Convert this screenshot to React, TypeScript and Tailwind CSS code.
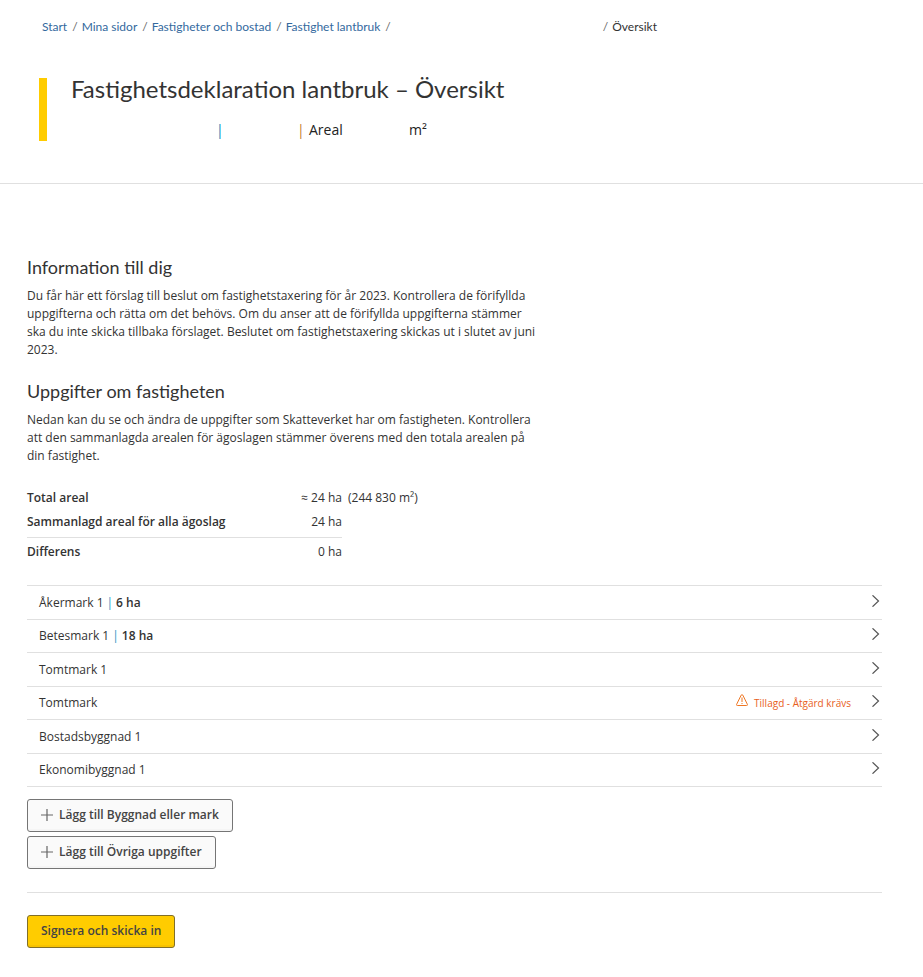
import React from 'react';

const crumbs = ['Start', 'Mina sidor', 'Fastigheter och bostad', 'Fastighet lantbruk'];

const properties = [
  { name: 'Åkermark 1', area: '6 ha' },
  { name: 'Betesmark 1', area: '18 ha' },
  { name: 'Tomtmark 1' },
  { name: 'Tomtmark', warning: 'Tillagd - Åtgärd krävs' },
  { name: 'Bostadsbyggnad 1' },
  { name: 'Ekonomibyggnad 1' },
];

const ChevronIcon = () => (
  <svg className="w-2 h-3 mb-1 shrink-0" viewBox="0 0 8 12" fill="none" stroke="#555" strokeWidth="1.2" aria-hidden="true">
    <path d="M0.5 0.3 L6.5 6 L0.5 11.7" />
  </svg>
);

const WarningIcon = () => (
  <svg className="w-3 h-3 mb-[6px] shrink-0" viewBox="0 0 12 12" fill="none" stroke="#ee7623" aria-hidden="true">
    <path d="M5.2 1.1 Q6 0 6.8 1.1 L11.4 10.4 Q11.7 11.5 10.7 11.5 H1.3 Q0.3 11.5 0.6 10.4 Z" strokeLinejoin="round" />
    <path d="M6 3.5 V8 M6 9 V10" />
  </svg>
);

const PlusIcon = () => (
  <svg className="w-3 h-3 shrink-0" viewBox="0 0 12 12" fill="none" stroke="#666" strokeWidth="1.2" aria-hidden="true">
    <path d="M6 0 V12 M0 6 H12" />
  </svg>
);

const AddButton = ({ label }: { label: string }) => (
  <button
    type="button"
    className="flex items-center gap-[6px] h-[33px] px-[13px] pb-[2px] border border-[#757575] rounded-[3px] bg-[#fafafa] text-[12px] text-[#444] font-semibold shadow-[inset_0_-2px_0_#f5f5f5]"
  >
    <PlusIcon />
    {label}
  </button>
);

const App = () => {
  return (
    <div className="bg-white text-[#333] text-[12px] leading-[18px] font-['Open_Sans',sans-serif]">
      <header className="border-b border-[#e0e0e0] pt-[18px] pb-[42px]">
        <nav aria-label="Brödsmulor" className="px-[42px] font-['Lato',sans-serif]">
          <ol className="flex items-center">
            {crumbs.map(crumb => (
              <li key={crumb} className="whitespace-nowrap">
                <a href="#" className="text-[#34699e] hover:underline">{crumb}</a>
                <span className="pl-[5px] pr-1 text-[#666]">/</span>
              </li>
            ))}
            <li className="w-[208px]" />
            <li className="whitespace-nowrap" aria-current="page">
              <span className="pr-1 text-[#666]">/</span>
              Översikt
            </li>
          </ol>
        </nav>

        <div className="flex mt-[42px] ml-[39px] border-l-8 border-[#ffcc00] pl-6 h-[63px]">
          <div>
            <h1 className="font-['Lato',sans-serif] text-[24px] leading-[22px]">Fastighetsdeklaration lantbruk – Översikt</h1>
            <p className="flex mt-5 text-[14px] leading-5 text-[#222]">
              <span className="w-[145px]" />
              <span className="w-[81px] text-[#0082b8]">|</span>
              <span className="w-3 text-[#c47a28]">|</span>
              <span className="w-[100px]">Areal</span>
              <span>m²</span>
            </p>
          </div>
        </div>
      </header>

      <main className="pl-[27px] pr-[41px] pt-[72px] pb-7">
        <section className="max-w-[514px]">
          <h2 className="font-['Lato',sans-serif] text-[18px] leading-[22px]">Information till dig</h2>
          <p className="mt-[9px]">
            Du får här ett förslag till beslut om fastighetstaxering för år 2023. Kontrollera de förifyllda uppgifterna
            och rätta om det behövs. Om du anser att de förifyllda uppgifterna stämmer ska du inte skicka tillbaka
            förslaget. Beslutet om fastighetstaxering skickas ut i slutet av juni 2023.
          </p>
        </section>

        <section className="max-w-[514px] mt-[21px]">
          <h2 className="font-['Lato',sans-serif] text-[18px] leading-[22px]">Uppgifter om fastigheten</h2>
          <p className="mt-[9px]">
            Nedan kan du se och ändra de uppgifter som Skatteverket har om fastigheten. Kontrollera att den sammanlagda
            arealen för ägoslagen stämmer överens med den totala arealen på din fastighet.
          </p>
        </section>

        <table className="mt-[21px]">
          <tbody>
            <tr className="h-6">
              <th scope="row" className="w-[215px] text-left font-semibold">Total areal</th>
              <td className="w-[100px] text-right">≈ 24 ha</td>
              <td className="pl-[6px]">(244 830 m²)</td>
            </tr>
            <tr className="h-[27px]">
              <th scope="row" className="pb-[3px] border-b border-[#e0e0e0] text-left font-semibold">Sammanlagd areal för alla ägoslag</th>
              <td className="pb-[3px] border-b border-[#e0e0e0] text-right">24 ha</td>
            </tr>
            <tr className="h-[29px]">
              <th scope="row" className="text-left font-semibold">Differens</th>
              <td className="text-right">0 ha</td>
            </tr>
          </tbody>
        </table>

        <ul className="mt-[19px] border-t border-[#e0e0e0]">
          {properties.map(item => (
            <li key={item.name} className="odd:h-[34px] even:h-[33px] border-b border-[#e0e0e0]">
              <button type="button" className="flex items-center w-full h-full pl-3 pr-[2px] text-left">
                <span>{item.name}</span>
                {item.area && (
                  <>
                    <span className="px-[3px] text-[#2f93c4]">|</span>
                    <span className="font-semibold">{item.area}</span>
                  </>
                )}
                <span className="flex items-center gap-[7px] ml-auto">
                  {item.warning && (
                    <span className="flex items-center gap-[6px] mr-[14px] text-[10px] text-[#e8601c]">
                      <WarningIcon />
                      {item.warning}
                    </span>
                  )}
                  <ChevronIcon />
                </span>
              </button>
            </li>
          ))}
        </ul>

        <div className="flex flex-col items-start gap-1 mt-3 pb-[23px] border-b border-[#e0e0e0]">
          <AddButton label="Lägg till Byggnad eller mark" />
          <AddButton label="Lägg till Övriga uppgifter" />
        </div>

        <button
          type="button"
          className="mt-[22px] h-[33px] px-[13px] pb-[2px] border border-[#806f2a] rounded-[3px] bg-[#ffcc00] text-[12px] text-[#444] font-semibold shadow-[inset_0_-2px_0_#f7c200]"
        >
          Signera och skicka in
        </button>
      </main>
    </div>
  );
};

export default App;
